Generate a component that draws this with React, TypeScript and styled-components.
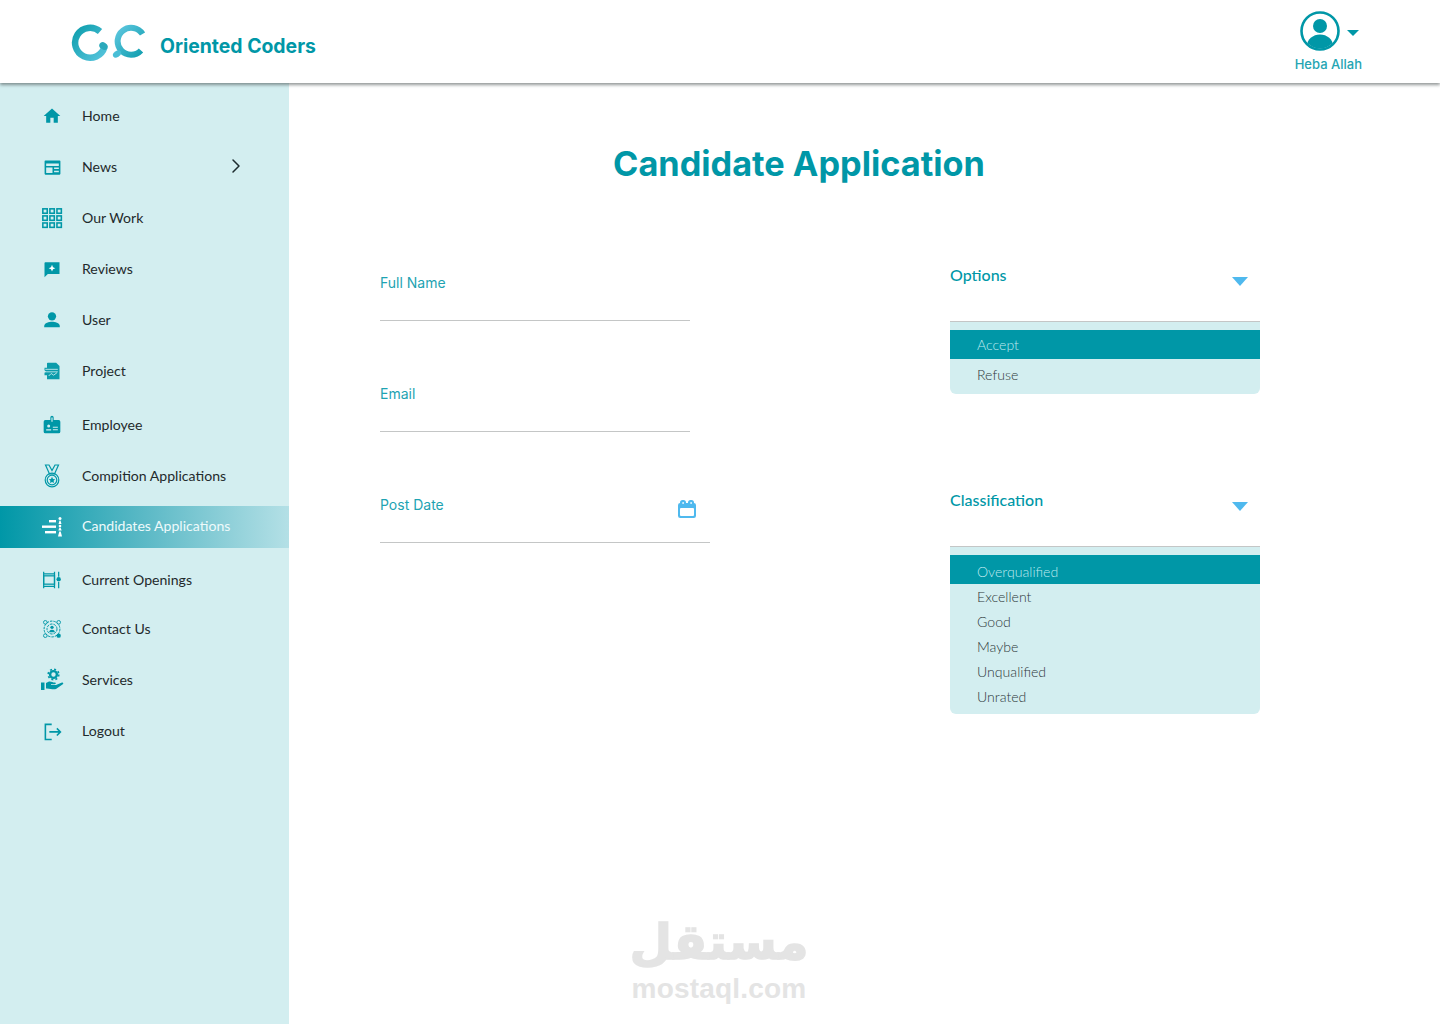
import React from "react";
import styled, { createGlobalStyle } from "styled-components";
import { ChevronRight } from "lucide-react";

const teal = "#0097a7";
const paleTeal = "#d3eef0";
const skyBlue = "#4fb9ee";

const GlobalStyle = createGlobalStyle`
  html, body {
    margin: 0;
    padding: 0;
    background: #fff;
  }
  * {
    box-sizing: border-box;
  }
`;

const IconSvg = ({ children, size = 22 }: { children: React.ReactNode; size?: number }) => (
  <svg width={size} height={size} viewBox="0 0 24 24" fill={teal}>
    {children}
  </svg>
);

const HomeIcon = () => (
  <IconSvg size={20}>
    <path d="M10 20v-6h4v6h5v-8h3L12 3 2 12h3v8z" />
  </IconSvg>
);

const NewsIcon = () => (
  <IconSvg size={19}>
    <path
      fillRule="evenodd"
      d="M3 3h18a1 1 0 0 1 1 1v16a1 1 0 0 1-1 1H3a1 1 0 0 1-1-1V4a1 1 0 0 1 1-1zm1 4v3h16V7zm0 5v7h8v-7zm10 0v2h6v-2zm0 4v2h6v-2z"
    />
  </IconSvg>
);

const GridIcon = () => (
  <IconSvg>
    <g fill="none" stroke={teal} strokeWidth="1.7">
      {[2, 9.7, 17.4].map((y) =>
        [2, 9.7, 17.4].map((x) => <rect key={`${x}-${y}`} x={x} y={y} width="4.8" height="4.8" />),
      )}
    </g>
  </IconSvg>
);

const ReviewIcon = () => (
  <IconSvg size={20}>
    <path d="M4 4h17v14H7l-4 4V5a1 1 0 0 1 1-1z" />
    <path d="M12 7l1.200 2.800 2.800 1.200-2.800 1.200-1.200 2.800-1.200-2.800-2.800-1.200 2.800-1.200z" fill="#fff" />
  </IconSvg>
);

const UserIcon = () => (
  <IconSvg>
    <circle cx="12" cy="8" r="4.500" />
    <path d="M3.500 20v-1.500c0-3 5.500-4.500 8.500-4.500s8.500 1.500 8.500 4.500V20z" />
  </IconSvg>
);

const ProjectIcon = () => (
  <IconSvg size={20}>
    <path d="M7 2h10l4 4v16H6v-5H3v-3l2-1-2-2V8h3V3a1 1 0 0 1 1-1z" opacity="0.95" />
    <path d="M4 10h15M4 13h15M8 18l3-3 3 2 4-3" fill="none" stroke={paleTeal} strokeWidth="1" />
  </IconSvg>
);

const EmployeeIcon = () => (
  <IconSvg size={20}>
    <path
      fillRule="evenodd"
      d="M10 6V3a2 2 0 0 1 4 0v3h6a2 2 0 0 1 2 2v12a2 2 0 0 1-2 2H4a2 2 0 0 1-2-2V8a2 2 0 0 1 2-2zm1.300-3v5h1.400V3zM5 17v1.500h6V17zm8-3v1.300h6V14zm0 3v1.300h6V17zM8 11.500a1.800 1.800 0 1 0 0 3.600 1.800 1.800 0 0 0 0-3.600z"
    />
  </IconSvg>
);

const MedalIcon = () => (
  <IconSvg size={24}>
    <g fill="none" stroke={teal} strokeWidth="1.200">
      <path d="M5.500 1h3.500l3 5.500L15 1h3.500l-4 9h-5z" />
      <circle cx="12" cy="16" r="6.800" />
      <circle cx="12" cy="16" r="4.800" />
    </g>
    <path d="M12 12.800l1 2.100 2.200.3-1.600 1.500.4 2.200-2-1-2 1 .4-2.200-1.600-1.500 2.200-.3z" />
  </IconSvg>
);

const CandidatesIcon = () => (
  <IconSvg size={24}>
    <g fill="#fff">
      <rect x="9" y="5" width="7" height="2.400" />
      <rect x="2" y="10.500" width="14" height="2.400" />
      <rect x="5" y="16" width="11" height="2.400" />
      <circle cx="20" cy="3.500" r="1.500" />
      <path d="M18.500 9l1-3.500h1l1 3.500z" />
      <circle cx="20" cy="11" r="1.300" />
      <path d="M18.300 15.500l1.200-3h1l1.200 3z" />
      <path d="M18 21.500l1.300-5h1.400l1.300 5z" />
    </g>
  </IconSvg>
);

const OpeningsIcon = () => (
  <IconSvg size={20}>
    <g fill="none" stroke={teal} strokeWidth="1.500">
      <rect x="2" y="7" width="13" height="10" />
      <path d="M2 2v20M15 2v20M2 4.500h13M2 19.500h13" />
      <path d="M20 2v6M20 14v8" />
    </g>
    <circle cx="20" cy="11" r="2.600" />
  </IconSvg>
);

const ContactIcon = () => (
  <IconSvg size={20}>
    <g fill="none" stroke={teal} strokeWidth="1.200" strokeDasharray="3 1.200">
      <circle cx="12" cy="12" r="9.500" />
      <circle cx="12" cy="12" r="6" />
    </g>
    <circle cx="12" cy="10" r="2" />
    <path d="M8.500 16c0-2 2-3 3.500-3s3.500 1 3.500 3z" />
    <circle cx="20" cy="20" r="2.600" />
    <circle cx="4" cy="4" r="2.200" fill="none" stroke={teal} strokeWidth="1.100" />
    <circle cx="20" cy="4" r="2.200" fill="none" stroke={teal} strokeWidth="1.100" />
    <circle cx="4" cy="20" r="2.200" fill="none" stroke={teal} strokeWidth="1.100" />
  </IconSvg>
);

const ServicesIcon = () => (
  <IconSvg size={24}>
    <path d="M1 14.500h3.500V22H1zM6 15l3-1.500c2-.5 3.500 1 6 1 1 0 1.300 1.800-.5 1.800H11v.7h5l6-2.500c1.200-.3 1.800 1 .8 1.800L16 21c-3 1-6-.8-10-.5z" />
    <circle cx="13.500" cy="6.500" r="3.400" fill="none" stroke={teal} strokeWidth="2.400" />
    <circle cx="13.500" cy="6.500" r="5.300" fill="none" stroke={teal} strokeWidth="1.600" strokeDasharray="2 2.160" />
  </IconSvg>
);

const LogoutIcon = () => (
  <IconSvg size={19}>
    <g fill="none" stroke={teal} strokeWidth="2">
      <path d="M11 3H3v19h8" />
      <path d="M8 12.500h14M17.500 8l4.500 4.500-4.500 4.500" />
    </g>
  </IconSvg>
);

type NavEntry = {
  label: string;
  icon: React.ReactNode;
  offset: number;
  hasArrow?: boolean;
  active?: boolean;
};

const navEntries: NavEntry[] = [
  { label: "Home", icon: <HomeIcon />, offset: 0 },
  { label: "News", icon: <NewsIcon />, offset: 9, hasArrow: true },
  { label: "Our Work", icon: <GridIcon />, offset: 9 },
  { label: "Reviews", icon: <ReviewIcon />, offset: 9 },
  { label: "User", icon: <UserIcon />, offset: 9 },
  { label: "Project", icon: <ProjectIcon />, offset: 9 },
  { label: "Employee", icon: <EmployeeIcon />, offset: 12 },
  { label: "Compition Applications", icon: <MedalIcon />, offset: 9 },
  { label: "Candidates Applications", icon: <CandidatesIcon />, offset: 9, active: true },
  { label: "Current Openings", icon: <OpeningsIcon />, offset: 11 },
  { label: "Contact Us", icon: <ContactIcon />, offset: 7 },
  { label: "Services", icon: <ServicesIcon />, offset: 9 },
  { label: "Logout", icon: <LogoutIcon />, offset: 9 },
];

function BrandMark() {
  return (
    <svg width="74" height="40" viewBox="0 0 74 40">
      <defs>
        <linearGradient id="ringLeft" x1="0" y1="0" x2="1" y2="1">
          <stop offset="0" stopColor="#0f9fae" />
          <stop offset="1" stopColor="#56c4dc" />
        </linearGradient>
        <linearGradient id="ringRight" x1="0" y1="0" x2="1" y2="1">
          <stop offset="0" stopColor="#5cc6de" />
          <stop offset="1" stopColor="#129fb0" />
        </linearGradient>
      </defs>
      <path d="M29 8.500A15 15 0 1 0 33.500 24" fill="none" stroke="url(#ringLeft)" strokeWidth="6.500" />
      <ellipse cx="32.500" cy="23" rx="4.500" ry="3.500" transform="rotate(35 32.500 23)" fill="#2aa9bb" />
      <path d="M71.500 11A13.500 13.500 0 1 0 70 27.500" fill="none" stroke="url(#ringRight)" strokeWidth="6" />
      <ellipse cx="46" cy="31" rx="4.500" ry="3" transform="rotate(-35 46 31)" fill="#49bed6" />
    </svg>
  );
}

function ProfileAvatar() {
  return (
    <svg width="40" height="40" viewBox="0 0 40 40">
      <defs>
        <clipPath id="avatarClip">
          <circle cx="20" cy="20" r="17.500" />
        </clipPath>
      </defs>
      <circle cx="20" cy="20" r="18.500" fill="#fff" stroke={teal} strokeWidth="2.600" />
      <circle cx="20" cy="15" r="7" fill={teal} />
      <ellipse cx="20" cy="35" rx="13" ry="11.500" fill={teal} clipPath="url(#avatarClip)" />
    </svg>
  );
}

function CalendarIcon() {
  return (
    <svg width="20" height="20" viewBox="0 0 20 20" fill={skyBlue}>
      <rect x="3" y="1" width="6" height="6" rx="2.600" />
      <rect x="11" y="1" width="6" height="6" rx="2.600" />
      <rect x="1" y="4" width="18" height="15" rx="2.200" />
      <rect x="3" y="9" width="14" height="8" rx="1" fill="#fff" />
      <rect x="5.500" y="3" width="1.200" height="2" fill="#fff" />
      <rect x="13.500" y="3" width="1.200" height="2" fill="#fff" />
    </svg>
  );
}

function SelectBlock({ title, options, compact }: { title: string; options: string[]; compact?: boolean }) {
  return (
    <SelectGroup>
      <SelectHead>
        <SelectTitle>{title}</SelectTitle>
        <BlueCaret />
      </SelectHead>
      <OptionPanel>
        {options.map((option, i) => (
          <OptionRow key={option} $selected={i === 0} $compact={compact}>
            {option}
          </OptionRow>
        ))}
      </OptionPanel>
    </SelectGroup>
  );
}

export default function App() {
  return (
    <Page>
      <GlobalStyle />
      <Header>
        <Brand>
          <BrandMark />
          <BrandName>Oriented Coders</BrandName>
        </Brand>
        <Profile>
          <ProfileTop>
            <ProfileAvatar />
            <TealCaret />
          </ProfileTop>
          <ProfileName>Heba Allah</ProfileName>
        </Profile>
      </Header>
      <Body>
        <Sidebar>
          {navEntries.map((entry) => (
            <NavRow key={entry.label} $offset={entry.offset} $active={entry.active}>
              <NavIcon>{entry.icon}</NavIcon>
              <NavLabel $active={entry.active}>{entry.label}</NavLabel>
              {entry.hasArrow && (
                <NavArrow>
                  <ChevronRight size={24} strokeWidth={1.500} color="#1c2b2e" />
                </NavArrow>
              )}
            </NavRow>
          ))}
        </Sidebar>
        <Main>
          <Title>Candidate Application</Title>
          <FormGrid>
            <LeftColumn>
              <Field>
                <FieldLabel>Full Name</FieldLabel>
              </Field>
              <Field>
                <FieldLabel>Email</FieldLabel>
              </Field>
              <Field $wide>
                <FieldLabel>Post Date</FieldLabel>
                <CalendarSlot>
                  <CalendarIcon />
                </CalendarSlot>
              </Field>
            </LeftColumn>
            <RightColumn>
              <SelectBlock title="Options" options={["Accept", "Refuse"]} />
              <SelectBlock
                title="Classification"
                options={["Overqualified", "Excellent", "Good", "Maybe", "Unqualified", "Unrated"]}
                compact
              />
            </RightColumn>
          </FormGrid>
          <Watermark>
            <WatermarkArabic>مستقل</WatermarkArabic>
            <WatermarkLatin>mostaql.com</WatermarkLatin>
          </Watermark>
        </Main>
      </Body>
    </Page>
  );
}

const Page = styled.div`
  width: 1440px;
  height: 1024px;
  overflow: hidden;
  display: flex;
  flex-direction: column;
  background: #fff;
  font-family: "Lato", "Liberation Sans", sans-serif;
`;

const Header = styled.header`
  height: 83px;
  flex: none;
  display: flex;
  align-items: flex-start;
  justify-content: space-between;
  padding: 23px 78px 0 71px;
  position: relative;
  z-index: 2;
  background: #fff;
  box-shadow: 0 2px 3px rgba(60, 70, 70, 0.55);
`;

const Brand = styled.div`
  display: flex;
  align-items: center;
  gap: 15px;
`;

const BrandName = styled.span`
  margin-top: 6px;
  font-family: "Inter", "Liberation Sans", sans-serif;
  font-size: 19.400px;
  font-weight: 700;
  color: ${teal};
  white-space: nowrap;
`;

const Profile = styled.div`
  margin-top: -12px;
  display: flex;
  flex-direction: column;
  align-items: center;
  gap: 5px;
`;

const ProfileTop = styled.div`
  display: flex;
  align-items: center;
  gap: 7px;
  padding-left: 3px;
`;

const TealCaret = styled.span`
  width: 0;
  height: 0;
  margin-top: 4px;
  border-left: 6px solid transparent;
  border-right: 6px solid transparent;
  border-top: 6px solid ${teal};
`;

const ProfileName = styled.span`
  font-family: "Inter", "Liberation Sans", sans-serif;
  font-size: 13px;
  font-weight: 500;
  color: #25a5b3;
  white-space: nowrap;
`;

const Body = styled.div`
  flex: 1;
  display: flex;
  min-height: 0;
`;

const Sidebar = styled.nav`
  width: 289px;
  flex: none;
  padding-top: 12px;
  background: ${paleTeal};
`;

const NavRow = styled.div<{ $offset: number; $active?: boolean }>`
  height: 42px;
  margin-top: ${(p) => p.$offset}px;
  padding-left: 40px;
  display: flex;
  align-items: center;
  position: relative;
  background: ${(p) =>
    p.$active ? `linear-gradient(90deg, ${teal} 0%, #5bb9c6 50%, #b4e0e6 100%)` : "transparent"};
`;

const NavIcon = styled.span`
  width: 24px;
  height: 24px;
  flex: none;
  display: flex;
  align-items: center;
  justify-content: center;
`;

const NavLabel = styled.span<{ $active?: boolean }>`
  margin-left: 18px;
  padding-bottom: ${(p) => (p.$active ? 4 : 2)}px;
  font-size: 14.100px;
  color: ${(p) => (p.$active ? "#eefafb" : "#1f2a2c")};
  white-space: nowrap;
`;

const NavArrow = styled.span`
  position: absolute;
  left: 224px;
  top: 8px;
  display: flex;
`;

const Main = styled.main`
  flex: 1;
  position: relative;
  padding-top: 59px;
`;

const Title = styled.h1`
  margin: 0;
  width: 1020px;
  text-align: center;
  font-family: "Inter", "Liberation Sans", sans-serif;
  font-size: 34.300px;
  line-height: 44px;
  font-weight: 700;
  color: ${teal};
`;

const FormGrid = styled.div`
  margin-top: 79px;
  padding-left: 91px;
  display: grid;
  grid-template-columns: 570px 310px;
`;

const LeftColumn = styled.div`
  display: flex;
  flex-direction: column;
  gap: 63px;
  padding-top: 8px;
`;

const Field = styled.div<{ $wide?: boolean }>`
  width: ${(p) => (p.$wide ? 330 : 310)}px;
  height: 48px;
  position: relative;
  border-bottom: 1px solid #c4c6c6;
`;

const FieldLabel = styled.label`
  display: block;
  font-family: "Inter", "Liberation Sans", sans-serif;
  font-size: 14px;
  line-height: 20px;
  color: #1ea3b2;
`;

const CalendarSlot = styled.span`
  position: absolute;
  right: 13px;
  top: 4px;
  display: flex;
`;

const RightColumn = styled.div`
  display: flex;
  flex-direction: column;
  gap: 96px;
`;

const SelectGroup = styled.div`
  display: flex;
  flex-direction: column;
`;

const SelectHead = styled.div`
  height: 57px;
  display: flex;
  align-items: flex-start;
  justify-content: space-between;
  padding-right: 12px;
  border-bottom: 1px solid #c4c6c6;
`;

const SelectTitle = styled.span`
  font-size: 16px;
  line-height: 20px;
  font-weight: 500;
  color: ${teal};
`;

const BlueCaret = styled.span`
  width: 0;
  height: 0;
  margin-top: 12px;
  border-left: 8px solid transparent;
  border-right: 8px solid transparent;
  border-top: 9px solid ${skyBlue};
`;

const OptionPanel = styled.div`
  padding: 8px 0 5px;
  background: ${paleTeal};
  border-radius: 0 0 6px 6px;
`;

const OptionRow = styled.div<{ $selected?: boolean; $compact?: boolean }>`
  height: ${(p) => (p.$selected ? 29 : p.$compact ? 25 : 30)}px;
  padding-left: 27px;
  padding-top: ${(p) => (p.$selected && p.$compact ? 4 : 0)}px;
  display: flex;
  align-items: center;
  font-size: 14.100px;
  font-weight: 300;
  color: ${(p) => (p.$selected ? "#bfe9ee" : "#2f393b")};
  background: ${(p) => (p.$selected ? teal : "transparent")};
`;

const Watermark = styled.div`
  position: absolute;
  left: 330px;
  top: 829px;
  width: 200px;
  display: flex;
  flex-direction: column;
  align-items: center;
  color: #e4e4e4;
  pointer-events: none;
`;

const WatermarkArabic = styled.span`
  font-family: "DejaVu Sans", sans-serif;
  font-size: 49px;
  line-height: 62px;
  font-weight: 700;
  -webkit-text-stroke: 1.500px #e4e4e4;
`;

const WatermarkLatin = styled.span`
  font-family: "Liberation Sans", sans-serif;
  font-size: 28px;
  line-height: 30px;
  font-weight: 700;
  letter-spacing: 0.2px;
`;
